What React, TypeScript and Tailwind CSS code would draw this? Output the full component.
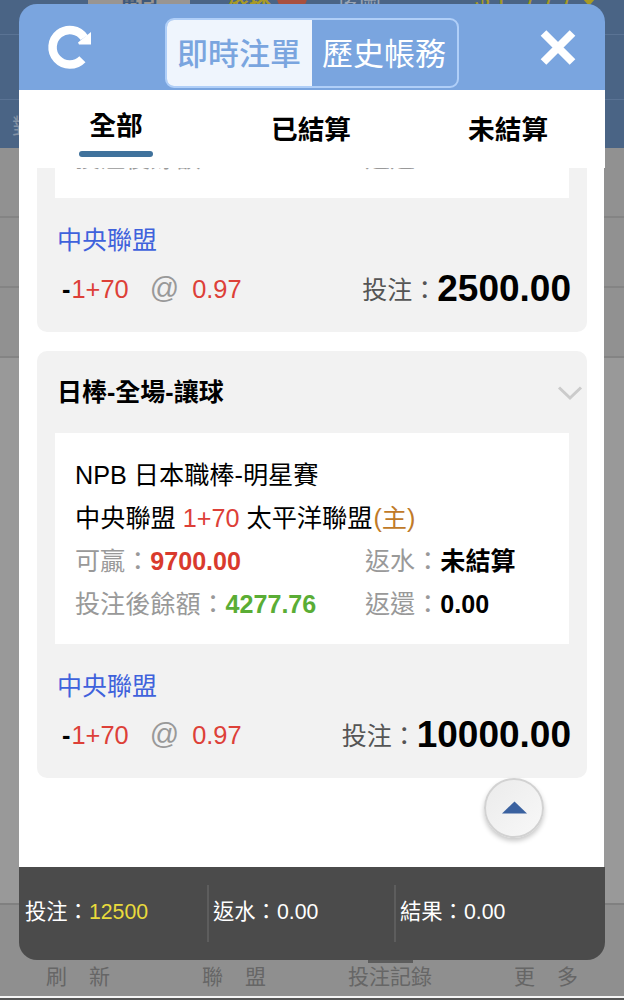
interface Bet {
  id: string;
  title: string;
  league: string;
  home: string;
  away: string;
  handicap: string;
  winnable: string;
  balance: string;
  rebate: string;
  refund: string;
  pick: string;
  odds: string;
  stake: string;
}

const bets: Bet[] = [
  {
    id: "1",
    title: "日棒-全場-讓球",
    league: "NPB 日本職棒-明星賽",
    home: "中央聯盟",
    away: "太平洋聯盟",
    handicap: "1+70",
    winnable: "2425.00",
    balance: "14277.76",
    rebate: "未結算",
    refund: "0.00",
    pick: "中央聯盟",
    odds: "0.97",
    stake: "2500.00",
  },
  {
    id: "2",
    title: "日棒-全場-讓球",
    league: "NPB 日本職棒-明星賽",
    home: "中央聯盟",
    away: "太平洋聯盟",
    handicap: "1+70",
    winnable: "9700.00",
    balance: "4277.76",
    rebate: "未結算",
    refund: "0.00",
    pick: "中央聯盟",
    odds: "0.97",
    stake: "10000.00",
  },
];

function BetCard({ bet }: { bet: Bet }) {
  return (
    <div className="h-[427px] shrink-0 rounded-[10px] bg-[#f2f2f2] text-[25px]">
      <div className="flex h-[82px] items-center justify-between pl-5 pr-[3px] pt-px">
        <span className="font-bold text-black">{bet.title}</span>
        <svg width="28" height="16" viewBox="0 0 28 16" fill="none">
          <path d="M3 2.5 L14 13 L25 2.5" stroke="#cbcbcb" strokeWidth="3" />
        </svg>
      </div>

      <div className="ml-[18px] mr-[18px] h-[211px] bg-white pl-5 pt-[21px] text-[25.2px] leading-[43px] text-black">
        <div>{bet.league}</div>
        <div>
          {bet.home} <span className="text-[#dd4038]">{bet.handicap}</span> {bet.away}
          <span className="ml-px text-[#c07a28]">(主)</span>
        </div>
        <div className="grid grid-cols-[290px_1fr] text-[25.1px] leading-[42.5px] text-[#999]">
          <div>
            可贏：<b className="text-[#d93a2d]">{bet.winnable}</b>
          </div>
          <div>
            返水：<b className="text-black">{bet.rebate}</b>
          </div>
          <div>
            投注後餘額：<b className="text-[#5aad35]">{bet.balance}</b>
          </div>
          <div>
            返還：<b className="text-black">{bet.refund}</b>
          </div>
        </div>
      </div>

      <div className="pl-5 pr-4 pt-[21px]">
        <div className="h-[43px] leading-[43px] text-[#3f62dc]">{bet.pick}</div>
        <div className="flex h-[54px] items-center text-[25.4px] text-[#dd4038]">
          <span className="ml-[5px] font-bold text-black">-</span>
          <span className="ml-px">{bet.handicap}</span>
          <span className="ml-[21px] text-[29px] text-[#999]">@</span>
          <span className="ml-[13px]">{bet.odds}</span>
          <span className="ml-auto pt-1 text-[25px] text-[#555]">投注：</span>
          <b className="text-[37px] text-black">{bet.stake}</b>
        </div>
      </div>
    </div>
  );
}

// Dimmed page behind the dialog
function Backdrop() {
  return (
    <div className="flex h-full flex-col bg-[#999]">
      <div className="h-[148px] bg-[#4a6485]">
        <div className="h-[35px] overflow-hidden border-b border-[#5a7394] text-[22px] leading-[22px]">
          <div className="-mt-[13px] flex">
            <span className="ml-[88px] w-[102px] bg-[#999591] text-center text-[19px] font-bold text-[#3f5878]">電司</span>
            <span className="ml-[37px] font-bold text-[#a89a25]">滾球</span>
            <span className="ml-[6px] w-[30px] rounded-full bg-[#a8503f]" />
            <span className="ml-[30px] text-[#9aa5b3]">優關</span>
            <span className="ml-[94px] text-[26px] tracking-[4px] text-[#a89a25]">$1,777</span>
            <svg className="ml-[4px] mt-[12px]" width="12" height="7" viewBox="0 0 12 7">
              <path d="M0 0 H12 L6 7 Z" fill="#a89a25" />
            </svg>
          </div>
        </div>
        <div className="h-[65px] border-b border-[#5a7394]" />
        <div className="pl-3 pt-3 text-[22px] leading-[30px] text-[#8593a5]">對</div>
      </div>
      <div className="h-[70px] border-b-2 border-[#848484] bg-[#919191]" />
      <div className="h-[70px] border-b-2 border-[#848484] bg-[#919191]" />
      <div className="h-[70px] border-b-2 border-[#848484] bg-[#919191]" />
      <div className="flex-1" />
      <div className="h-[93px] border-t-2 border-[#808080] bg-[#8f8f8f] text-[21px] text-[#666]">
        <div className="grid h-[91px] grid-cols-4 items-end pb-1 text-center leading-[30px]">
          <div className="flex justify-center gap-[22px]"><span>刷</span><span>新</span></div>
          <div className="flex justify-center gap-[22px]"><span>聯</span><span>盟</span></div>
          <div>
            <div className="mx-auto -mb-px h-[7px] w-[45px] bg-[#5c5c5c]" />
            投注記錄
          </div>
          <div className="flex justify-center gap-[22px]"><span>更</span><span>多</span></div>
        </div>
      </div>
      <div className="h-[2px] bg-[#f5f5f5]" />
      <div className="h-[2px] bg-[#555]" />
    </div>
  );
}

export default function App() {
  return (
    <div className="relative h-[1000px] w-[624px] overflow-hidden font-['Liberation_Sans','Noto_Sans_CJK_TC',sans-serif]">
      <Backdrop />

      <div className="absolute left-[19px] top-[4px] flex h-[956px] w-[586px] flex-col">
        {/* Title bar */}
        <div className="flex h-[86px] shrink-0 rounded-t-[18px] bg-[#7aa5df]">
          <svg className="ml-[28px] mt-[20px]" width="48" height="48" viewBox="0 0 48 48" fill="none">
            <path d="M35.4 35.2 A17.3 17.3 0 1 1 37.2 13.6" stroke="#fff" strokeWidth="8.5" />
            <path d="M44 8 V20.5 H32 L31 18.5 L34 16 L39 12 Z" fill="#fff" />
          </svg>
          <div className="ml-[70px] mt-[14px] flex h-[70px] w-[294px] overflow-hidden rounded-[9px] border-2 border-[#b0cff8] text-[31px] leading-[69px]">
            <div className="w-[145px] bg-[#eff5fd] pl-[10px] font-medium text-[#7aa5df]">即時注單</div>
            <div className="pl-[10px] text-white">歷史帳務</div>
          </div>
          <svg className="ml-[79px] mt-[24px]" width="40" height="40" viewBox="0 0 40 40" fill="none">
            <path d="M5.5 5 L34.5 34 M34.5 5 L5.5 34" stroke="#fff" strokeWidth="8" />
          </svg>
        </div>

        {/* Tabs */}
        <div className="flex h-[78px] shrink-0 bg-white text-[26.7px] font-bold leading-[40px] text-black">
          <div className="ml-[60px] w-[74px] pt-[16px] text-center">
            全部
            <div className="mt-[5px] h-[6px] rounded-full bg-[#40729c]" />
          </div>
          <div className="ml-[118px] pt-5">已結算</div>
          <div className="ml-[117px] pt-5">未結算</div>
        </div>

        {/* Bet list, scrolled to the end */}
        <div className="relative mr-px flex h-[699px] shrink-0 flex-col justify-end gap-[19px] overflow-hidden bg-white pb-[89px] pl-[18px] pr-[17px]">
          {bets.map((bet) => (
            <BetCard key={bet.id} bet={bet} />
          ))}
          <button className="absolute bottom-[29px] right-[60px] flex h-[60px] w-[60px] items-center justify-center rounded-full border-2 border-[#d2d2d2] bg-linear-to-br from-[#ebebeb] to-[#f8f8f8] shadow-[0_3px_5px_rgba(0,0,0,0.22)]">
            <svg className="mb-px ml-px" width="25" height="13" viewBox="0 0 25 13">
              <path d="M12.5 0.5 L25 12.5 H0 Z" fill="#3a619f" />
            </svg>
          </button>
        </div>

        {/* Totals */}
        <div className="flex h-[93px] shrink-0 items-center rounded-b-[18px] bg-[#4b4b4b] text-[21.3px] text-white">
          <div className="w-[188px] pb-px pl-[6px]">
            投注：<span className="text-[#eadb3c]">12500</span>
          </div>
          <div className="flex h-[57px] w-[187px] items-center border-l-2 border-[#5d5d5d] pb-px pl-1">返水：0.00</div>
          <div className="flex h-[57px] items-center border-l-2 border-[#5d5d5d] pb-px pl-1">結果：0.00</div>
        </div>
      </div>
    </div>
  );
}
